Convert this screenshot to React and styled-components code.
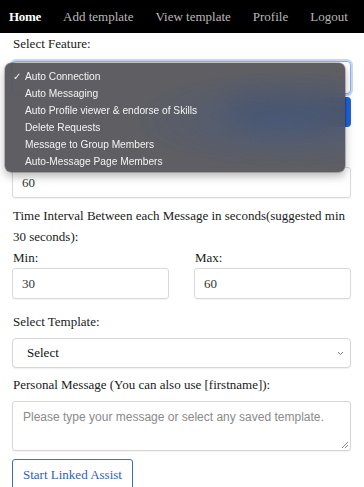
import styled, { createGlobalStyle } from "styled-components";

const GlobalStyle = createGlobalStyle`
  body {
    margin: 0;
    background: #fff;
    font-family: "Liberation Serif", "Times New Roman", serif;
    font-size: 13px;
    color: #111;
  }
`;

const navItems = ["Home", "Add template", "View template", "Profile", "Logout"];
const features = [
  "Auto Connection",
  "Auto Messaging",
  "Auto Profile viewer & endorse of Skills",
  "Delete Requests",
  "Message to Group Members",
  "Auto-Message Page Members",
];

export default function App() {
  return (
    <Page>
      <GlobalStyle />
      <Nav>
        {navItems.map((item, i) => (
          <NavLink key={item} $active={i === 0}>{item}</NavLink>
        ))}
      </Nav>
      <Form>
        <Label>Select Feature:</Label>
        <Select $focus>
          <span />
          <Chevron />
        </Select>
        <ButtonRow>
          <BlueButton />
        </ButtonRow>
        <Spacer />
        <Input>60</Input>
        <Label $top={7}>
          Time Interval Between each Message in seconds(suggested min 30 seconds):
        </Label>
        <Columns>
          <div>
            <Label>Min:</Label>
            <Input>30</Input>
          </div>
          <div>
            <Label>Max:</Label>
            <Input>60</Input>
          </div>
        </Columns>
        <Label $top={12}>Select Template:</Label>
        <Select $top={6}>
          <span>Select</span>
          <Chevron />
        </Select>
        <Label $top={6}>Personal Message (You can also use [firstname]):</Label>
        <TextArea>
          <Placeholder>Please type your message or select any saved template.</Placeholder>
          <Grip width="8" height="8" viewBox="0 0 8 8">
            <path d="M7 1 L1 7 M7 4 L4 7" stroke="#888" strokeWidth="1" />
          </Grip>
        </TextArea>
        <OutlineButton>Start Linked Assist</OutlineButton>
      </Form>
      <Menu>
        {features.map((f, i) => (
          <MenuItem key={f}>
            <Check>{i === 0 ? "✓" : ""}</Check>
            {f}
          </MenuItem>
        ))}
      </Menu>
    </Page>
  );
}

function Chevron() {
  return (
    <svg width="7" height="5" viewBox="0 0 7 5">
      <path d="M1 1 L3.5 3.5 L6 1" fill="none" stroke="#777" strokeWidth="1" />
    </svg>
  );
}

const Page = styled.div`
  position: relative;
  min-height: 487px;
`;

const Nav = styled.nav`
  display: flex;
  align-items: center;
  height: 33px;
  background: #000;
  padding-left: 9px;
  gap: 22px;
`;

const NavLink = styled.a`
  font-size: 13px;
  color: ${(p) => (p.$active ? "#fff" : "#b8b8b8")};
  font-weight: ${(p) => (p.$active ? 700 : 400)};
  letter-spacing: ${(p) => (p.$active ? "-0.3px" : "0")};
`;

const Form = styled.div`
  padding: 0 13px 0 12px;
`;

const Label = styled.div`
  line-height: 21px;
  margin-top: ${(p) => p.$top || 0}px;
  padding-left: 1px;
  color: #1a1a1a;
`;

const Spacer = styled.div`
  height: 40px;
`;

const Select = styled.div`
  display: flex;
  align-items: center;
  justify-content: space-between;
  box-sizing: border-box;
  height: ${(p) => (p.$focus ? 33 : 30)}px;
  margin-top: ${(p) => (p.$top != null ? p.$top : 7)}px;
  padding: 0 6px 0 14px;
  border: 1px solid ${(p) => (p.$focus ? "#8fb0e8" : "#d6d6d6")};
  border-radius: 4px;
  box-shadow: ${(p) => (p.$focus ? "0 0 0 2px #c9d9f5" : "0 1px 1px rgba(0,0,0,0.06)")};
  background: #fff;
`;

const ButtonRow = styled.div`
  display: flex;
  justify-content: flex-end;
  margin-top: 3px;
`;

const BlueButton = styled.div`
  width: 120px;
  height: 30px;
  border-radius: 4px;
  background: #1f63dd;
`;

const Input = styled.div`
  box-sizing: border-box;
  height: 31px;
  display: flex;
  align-items: center;
  padding: 0 9px;
  border: 1px solid #d9d9d9;
  border-radius: 3px;
  color: #333;
  box-shadow: 0 1px 1px rgba(0, 0, 0, 0.05);
`;

const Columns = styled.div`
  display: grid;
  grid-template-columns: 1fr 1fr;
  column-gap: 25px;
`;

const TextArea = styled.div`
  position: relative;
  box-sizing: border-box;
  height: 50px;
  margin-top: 6px;
  padding: 7px 10px;
  border: 1px solid #d6d6d6;
  border-radius: 3px;
  box-shadow: 0 1px 1px rgba(0, 0, 0, 0.05);
`;

const Placeholder = styled.span`
  font-family: "Liberation Sans", Arial, sans-serif;
  font-size: 12px;
  color: #8a8a8a;
`;

const Grip = styled.svg`
  position: absolute;
  right: 1px;
  bottom: 1px;
`;

const OutlineButton = styled.div`
  display: inline-flex;
  align-items: center;
  box-sizing: border-box;
  height: 32px;
  margin-top: 8px;
  padding: 0 10px;
  border: 1px solid #3d6cc0;
  border-radius: 3px;
  color: #2e5fc2;
  background: #fff;
`;

const Menu = styled.div`
  position: absolute;
  top: 63px;
  left: 5px;
  width: 340px;
  height: 109px;
  box-sizing: border-box;
  padding: 5px 0 3px;
  border-radius: 6px;
  background:
    radial-gradient(ellipse 45% 45% at 82% 52%, rgba(66, 90, 135, 0.55), transparent 100%),
    rgba(80, 80, 86, 0.92);
  backdrop-filter: blur(14px);
  box-shadow: 0 4px 10px rgba(0, 0, 0, 0.3), 0 0 0 0.5px rgba(0, 0, 0, 0.4);
`;

const MenuItem = styled.div`
  display: flex;
  align-items: center;
  height: 17px;
  font-family: "Liberation Sans", Arial, sans-serif;
  font-size: 10.2px;
  color: #f4f4f4;
`;

const Check = styled.span`
  width: 20px;
  padding-left: 8px;
  box-sizing: border-box;
  font-size: 10px;
`;
